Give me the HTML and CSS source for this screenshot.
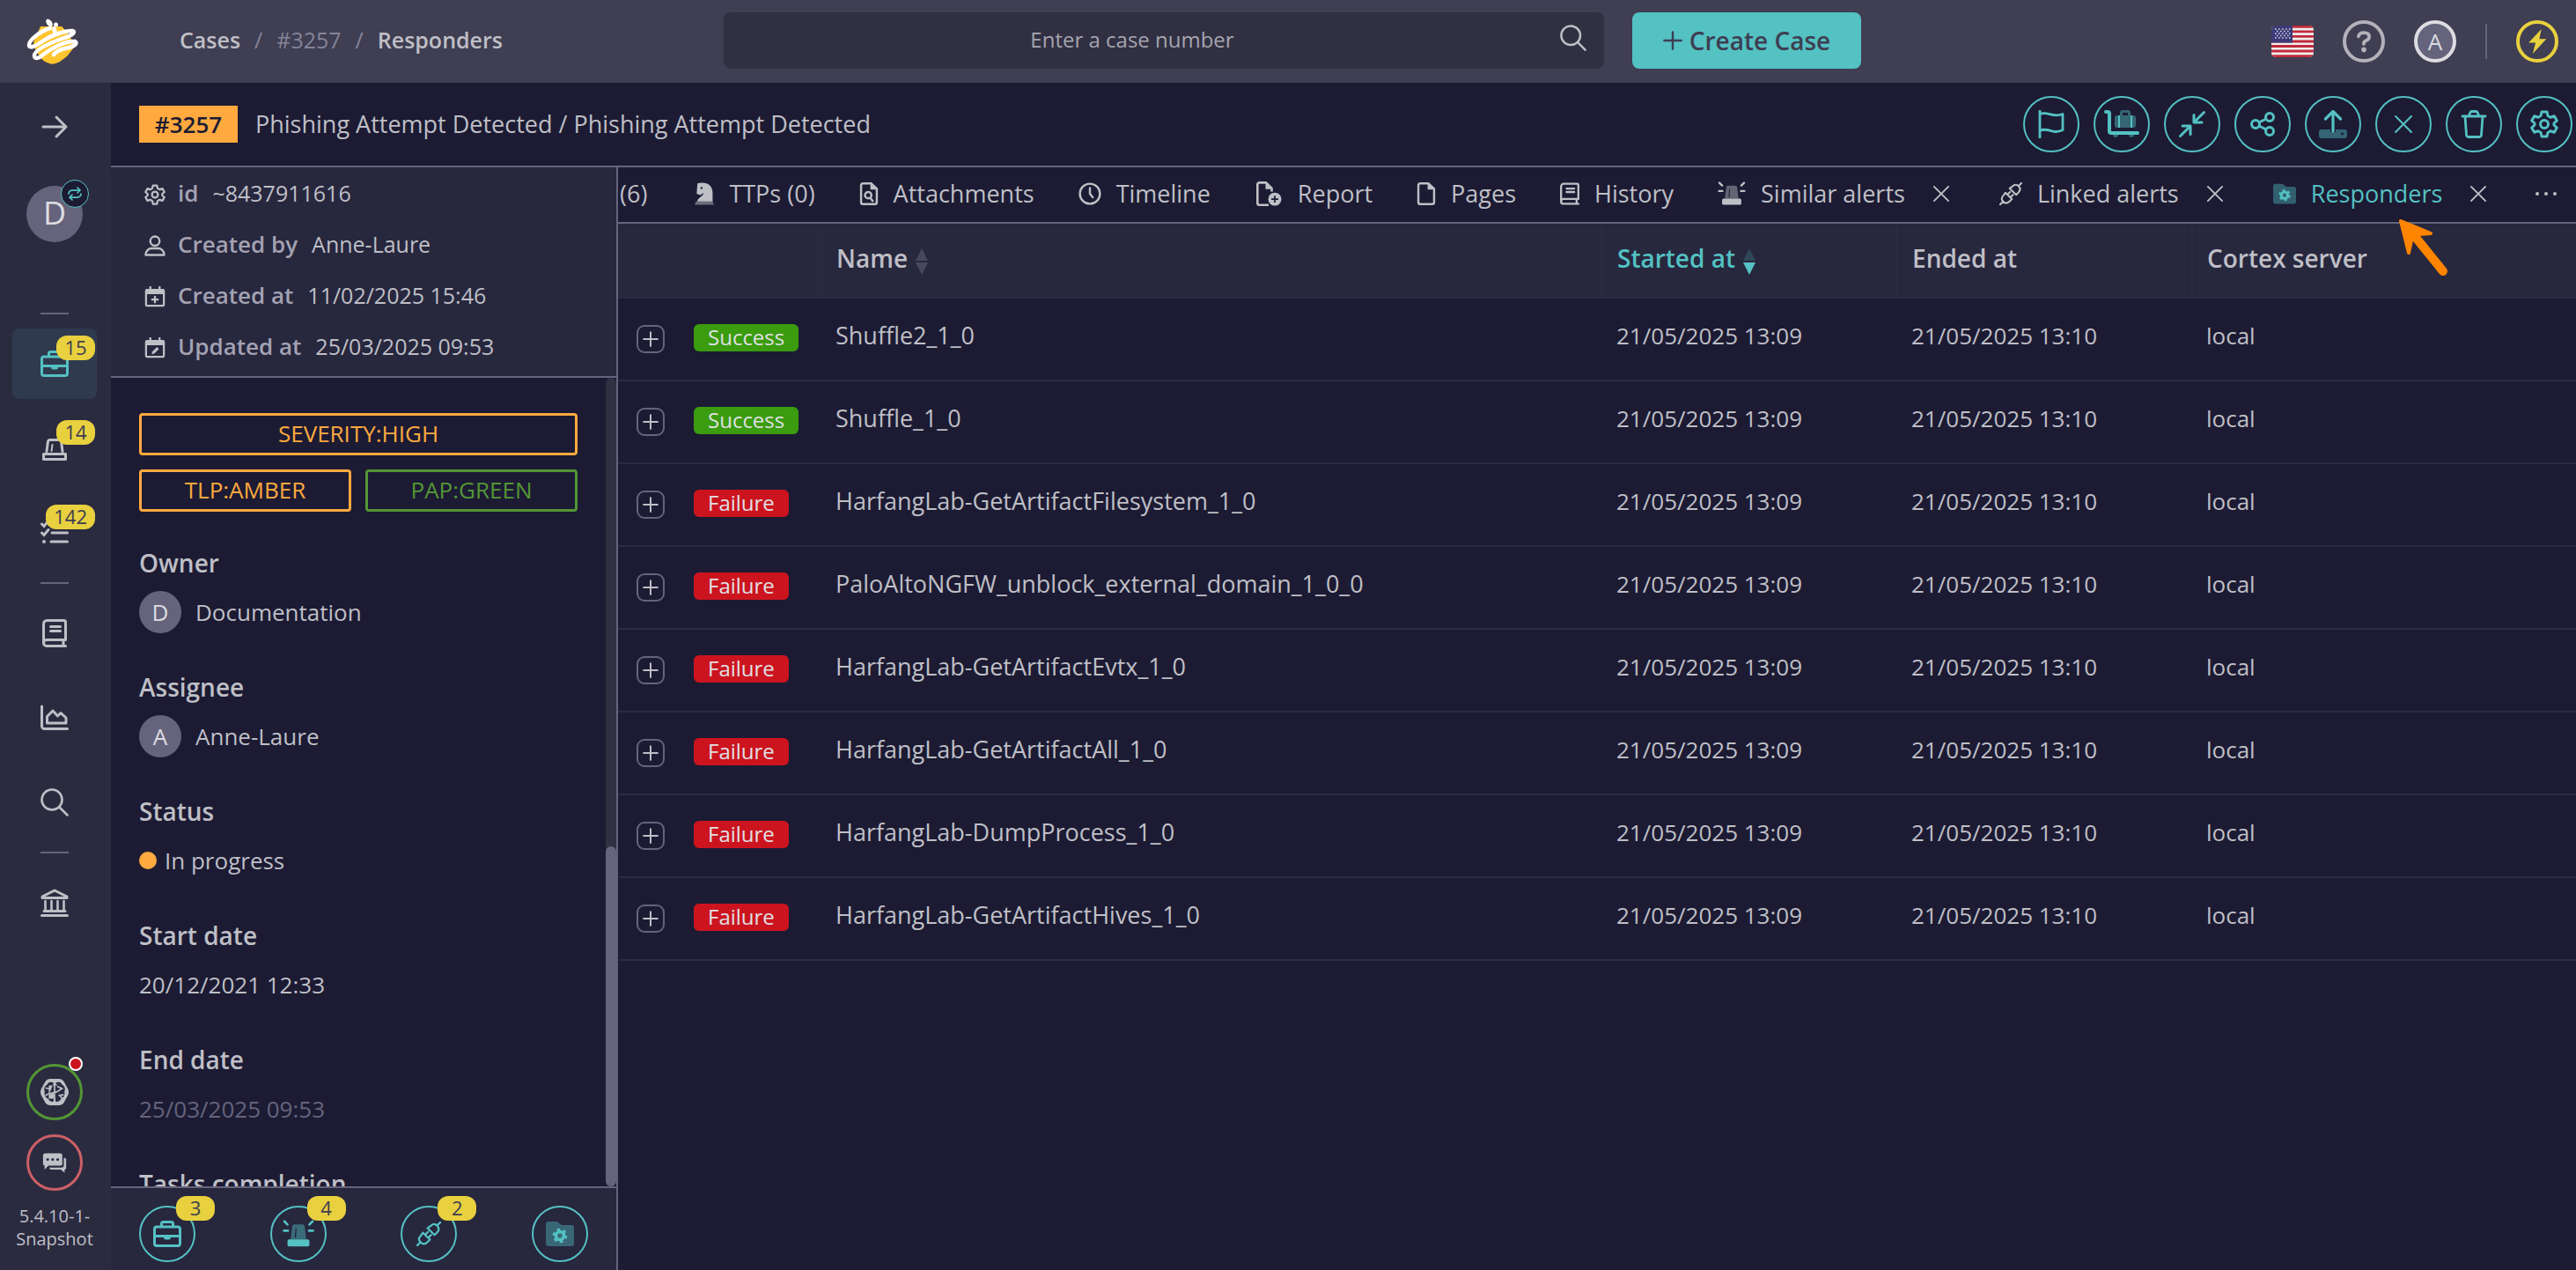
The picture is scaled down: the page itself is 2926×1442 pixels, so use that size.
FILE: index.html
```html
<!DOCTYPE html>
<html lang="en">
<head>
  <meta charset="UTF-8" />
  <title>#3257 - Responders</title>
  <link rel="stylesheet" href="styles.css">
</head>
<body>

  <!-- icon set -->
  <svg class="sprite" aria-hidden="true">
    <symbol id="i-briefcase" viewBox="0 0 32 32"><g fill="none" stroke="currentColor" stroke-width="3" stroke-linejoin="round"><rect x="1.500" y="8" width="29" height="21.500" rx="2.500"/><path d="M9.500 8V4.500a2 2 0 0 1 2-2h9a2 2 0 0 1 2 2V8M1.500 18.500h29"/></g><path d="M12 18h8v2a2.500 2.500 0 0 1-2.500 2.500h-3A2.500 2.500 0 0 1 12 20z" fill="currentColor"/></symbol>
    <symbol id="i-siren" viewBox="0 0 32 32"><g fill="none" stroke="currentColor" stroke-width="3" stroke-linejoin="round" stroke-linecap="round"><path d="M7 19.500L8.500 8a2 2 0 0 1 2-1.500h11a2 2 0 0 1 2 1.500L25 19.500M3.500 22.500h25v6h-25z"/><path d="M12.500 19l1-7" stroke-width="2"/></g></symbol>
    <symbol id="i-tasks" viewBox="0 0 32 32"><g fill="none" stroke="currentColor" stroke-width="3" stroke-linecap="round"><path d="M13 6h17.500M13 16h17.500M12 26h18.500M1.500 6l2.500 2.500 5-6M1.500 16l2.500 2.500 5-6"/></g><circle cx="4" cy="26" r="2" fill="currentColor"/></symbol>
    <symbol id="i-book" viewBox="2 0 28 32"><g fill="none" stroke="currentColor" stroke-width="3" stroke-linecap="round" stroke-linejoin="round"><path d="M28.500 23.500V3.500a2 2 0 0 0-2-2H7.500a4 4 0 0 0-4 4V27a3.500 3.500 0 0 0 3.500 3.500h21.500M28.500 23.500H7a3.500 3.500 0 0 0-3.500 3.500M26 24v6M11.500 8.500h11M11.500 13.500h11"/></g></symbol>
    <symbol id="i-chart" viewBox="0 0 32 32"><g fill="none" stroke="currentColor" stroke-width="3" stroke-linecap="round" stroke-linejoin="round"><path d="M1.500 3v22.500a3 3 0 0 0 3 3h26M7.500 22V14.500L14 8l5.500 6 3.500-3.500 6 5.500v6z"/></g></symbol>
    <symbol id="i-search" viewBox="0 0 32 32"><g fill="none" stroke="currentColor" stroke-width="2.600" stroke-linecap="round"><circle cx="13" cy="13" r="11.500"/><path d="M21.500 21.500L30.500 30.500"/></g></symbol>
    <symbol id="i-bank" viewBox="0 0 32 32"><g fill="none" stroke="currentColor" stroke-width="3" stroke-linecap="round" stroke-linejoin="round"><path d="M2 10.500v-1.500L16 2l14 7v1.500zM1.500 30.500h29M4 25.500h24"/><path d="M5.500 14v11M12.500 14v11M19.500 14v11M26.500 14v11" stroke-width="2.600"/></g></symbol>
    <symbol id="i-arrow" viewBox="0 0 32 32"><path d="M3 16h25M18 5l11 11-11 11" fill="none" stroke="currentColor" stroke-width="3" stroke-linecap="round" stroke-linejoin="round"/></symbol>
    <symbol id="i-swap" viewBox="0 0 32 32"><path d="M2 16a8 8 0 0 1 8-8h18M22 2l6 6-6 6M30 16a8 8 0 0 1-8 8H4M10 18l-6 6 6 6" fill="none" stroke="currentColor" stroke-width="3.500" stroke-linecap="round" stroke-linejoin="round"/></symbol>
    <symbol id="i-brain" viewBox="0 0 34 32"><path d="M11 0h12q3 0 5 3l5 9q2 4 0 8l-5 9q-2 3-5 3H11q-3 0-5-3l-5-9q-2-4 0-8l5-9q2-3 5-3z" fill="currentColor"/><path d="M16 5q-6-3-8 2-5 3-3 8-1 7 4 9 3 5 7 3V17l-6 2M18 5q6-3 8 2 5 3 3 8 1 7-4 9-3 5-7 3V16l7-3M10 8h14v16H10z" fill="#2b2b40"/><path d="M6 20q5-3 10-3.500t10-5.500M6 11l7 1.500M28 19l-5 1 4 4M17 4v24M20 9l7 3" fill="none" stroke="currentColor" stroke-width="1.800"/></symbol>
    <symbol id="i-chat" viewBox="0 0 32 32"><path d="M28 10h1a2 2 0 0 1 2 2v11a2 2 0 0 1-2 2v4l-5-4H12a3 3 0 0 1-3-2.500h16a3 3 0 0 0 3-3z" fill="currentColor"/><path d="M5 4h18a3 3 0 0 1 3 3v10a3 3 0 0 1-3 3H8l-5 5v-5a3 3 0 0 1-2-3V7a3 3 0 0 1 3-3z" fill="currentColor"/><g fill="#2b2b40"><circle cx="7" cy="12" r="1.800"/><circle cx="13.500" cy="12" r="1.800"/><circle cx="20" cy="12" r="1.800"/></g></symbol>
    <symbol id="i-gear" viewBox="0 0 32 32"><g fill="none" stroke="currentColor" stroke-width="3" stroke-linejoin="round"><path d="M13 2h6l1 4.500 3 1.700 4.300-1.400 3 5.200-3.300 3v2l3.300 3-3 5.200-4.300-1.400-3 1.700L19 30h-6l-1-4.500-3-1.700-4.300 1.400-3-5.200L5 17v-2l-3.300-3 3-5.200L9 8.200l3-1.700z"/><circle cx="16" cy="16" r="4.500"/></g></symbol>
    <symbol id="i-user" viewBox="0 0 32 32"><g fill="none" stroke="currentColor" stroke-width="3.200" stroke-linejoin="round"><circle cx="16" cy="9" r="7"/><path d="M2 30c0-7 5-10 9-10h10c4 0 9 3 9 10z"/></g></symbol>
    <symbol id="i-cal-plus" viewBox="0 0 32 32"><path d="M4 4h24a3 3 0 0 1 3 3v21a3 3 0 0 1-3 3H4a3 3 0 0 1-3-3V7a3 3 0 0 1 3-3zm0 8v16h24V12z" fill="currentColor" fill-rule="evenodd"/><path d="M9 0v6M23 0v6M16 14.500v11M10.500 20h11" stroke="currentColor" stroke-width="3"/></symbol>
    <symbol id="i-cal-edit" viewBox="0 0 32 32"><path d="M4 4h24a3 3 0 0 1 3 3v21a3 3 0 0 1-3 3H4a3 3 0 0 1-3-3V7a3 3 0 0 1 3-3zm0 8v16h24V12z" fill="currentColor" fill-rule="evenodd"/><path d="M9 0v6M23 0v6" stroke="currentColor" stroke-width="3"/><path d="M11 25.500l1-4 7-7 3 3-7 7z" fill="currentColor"/></symbol>
    <symbol id="i-knight" viewBox="2 0 28 32"><path d="M6 1c14-3 22 3 22 14v12H6c0-5 9-8 9-12l-5 3-5-2zm6 5a1.500 1.500 0 1 0 .1 0z" fill="currentColor" fill-rule="evenodd"/><path d="M4 27h24l2 5H2z" fill="currentColor" opacity=".5"/></symbol>
    <symbol id="i-file" viewBox="3 0 26 32"><path d="M7 1.500h12L27 9v19a2.500 2.500 0 0 1-2.500 2.500h-17A2.500 2.500 0 0 1 5 28V4a2.500 2.500 0 0 1 2.500-2.500" fill="none" stroke="currentColor" stroke-width="3"/><path d="M18 1l9 9h-9z" fill="currentColor"/></symbol>
    <symbol id="i-file-search" viewBox="3 0 26 32"><path d="M7 1.500h12L27 9v19a2.500 2.500 0 0 1-2.500 2.500h-17A2.500 2.500 0 0 1 5 28V4a2.500 2.500 0 0 1 2.500-2.500" fill="none" stroke="currentColor" stroke-width="3"/><path d="M18 1l9 9h-9z" fill="currentColor"/><g fill="none" stroke="currentColor" stroke-width="3"><circle cx="15" cy="18" r="4.500"/><path d="M18 22l4 5"/></g></symbol>
    <symbol id="i-file-plus" viewBox="0 0 34 32"><path d="M17 30.500H5A2.500 2.500 0 0 1 2.500 28V4A2.500 2.500 0 0 1 5 1.500h8.500L21 9v4" fill="none" stroke="currentColor" stroke-width="3"/><path d="M13 1l9 9h-9z" fill="currentColor"/><circle cx="25" cy="23" r="8.500" fill="currentColor"/><path d="M25 18.500v9M20.500 23h9" stroke="#1c1b33" stroke-width="2"/></symbol>
    <symbol id="i-clock" viewBox="0 0 32 32"><g fill="none" stroke="currentColor" stroke-width="3" stroke-linecap="round"><circle cx="16" cy="16" r="14"/><path d="M16 8v8l4 5"/></g></symbol>
    <symbol id="i-siren-on" viewBox="0 0 40 36"><path d="M10 25l2-16a3 3 0 0 1 3-3h10a3 3 0 0 1 3 3l2 16z" fill="currentColor" opacity=".45"/><path d="M16 23l1-12" stroke="#26263d" stroke-width="1.500"/><rect x="6" y="25" width="28" height="9" rx="2" fill="currentColor"/><path d="M2 2l4 4M1.500 14h5M38 2l-4 4M38.500 14h-5" stroke="currentColor" stroke-width="3" stroke-linecap="round"/></symbol>
    <symbol id="i-plug" viewBox="0 0 32 32"><g fill="none" stroke="currentColor" stroke-width="2.600" stroke-linecap="round" stroke-linejoin="round"><path d="M27 5l4-4M14.500 8.500l9 9 3-3c3.500-3.500 3.500-6 .5-9s-5.500-3-9 .5zM5 27l-4 4M8.500 14.500l9 9-3 3c-3.500 3.500-6 3.500-9 .5s-3-5.500.5-9zM11.500 17l3.500-3.500M15.500 21l3.500-3.500"/></g></symbol>
    <symbol id="i-folder-gear" viewBox="0 0 32 32"><path d="M3 2h9q2 0 3.500 2T19 6h10a3 3 0 0 1 3 3v18a3 3 0 0 1-3 3H3a3 3 0 0 1-3-3V5a3 3 0 0 1 3-3z" fill="currentColor" opacity=".42"/><g fill="none" stroke="currentColor"><circle cx="16" cy="18" r="4.500" stroke-width="3.600"/><circle cx="16" cy="18" r="7" stroke-width="2.600" stroke-dasharray="3.600 3.730"/></g></symbol>
    <symbol id="i-close" viewBox="0 0 32 32"><path d="M3 3l26 26M29 3L3 29" fill="none" stroke="currentColor" stroke-width="3" stroke-linecap="round"/></symbol>
    <symbol id="i-plus" viewBox="0 0 32 32"><path d="M16 2v28M2 16h28" fill="none" stroke="currentColor" stroke-width="3.500" stroke-linecap="round"/></symbol>
    <symbol id="i-dots" viewBox="0 0 32 32"><g fill="currentColor"><circle cx="6" cy="16" r="2"/><circle cx="16" cy="16" r="2"/><circle cx="26" cy="16" r="2"/></g></symbol>
    <symbol id="i-flag" viewBox="0 0 32 32"><path d="M3 1v30M3 4.500c9-4 14 5 26 0v18c-12 6-17-4-26 1" fill="none" stroke="currentColor" stroke-width="2.800" stroke-linecap="round" stroke-linejoin="round"/></symbol>
    <symbol id="i-cart" viewBox="0 0 40 32"><path d="M2 2h2a2 2 0 0 1 2 2v20a2 2 0 0 0 2 2h30" fill="none" stroke="currentColor" stroke-width="4" stroke-linecap="round"/><g fill="currentColor" opacity=".45"><path d="M12 9a3 3 0 0 1 3-3h3V3a3 3 0 0 1 3-3h6a3 3 0 0 1 3 3v3h3a3 3 0 0 1 3 3v8a3 3 0 0 1-3 3H15a3 3 0 0 1-3-3zm9-3h6V3h-6z" fill-rule="evenodd"/><path d="M10 28h6a3 3 0 0 1-6 0M28 28h6a3 3 0 0 1-6 0"/></g><path d="M17 6v14M31 6v14" stroke="currentColor" stroke-width="2"/></symbol>
    <symbol id="i-merge" viewBox="0 0 32 32"><path d="M29.500 2.500L18 14M18 5.500V14h9M2.500 29.500L14 18M5 18h9v9.500" fill="none" stroke="currentColor" stroke-width="3" stroke-linecap="round" stroke-linejoin="round"/></symbol>
    <symbol id="i-share" viewBox="0 0 32 32"><g fill="none" stroke="currentColor" stroke-width="3"><circle cx="8" cy="16" r="4.500"/><circle cx="24" cy="8" r="4.500"/><circle cx="24" cy="24" r="4.500"/><path d="M12 14l8-4M12 18l8 4"/></g></symbol>
    <symbol id="i-upload" viewBox="0 0 32 32"><path d="M3 22h10v3h6v-3h10a3 3 0 0 1 3 3v4a3 3 0 0 1-3 3H3a3 3 0 0 1-3-3v-4a3 3 0 0 1 3-3zm23.500 3.500a1.500 1.500 0 1 0 .1 0z" fill="currentColor" fill-rule="evenodd" opacity=".45"/><path d="M16 24V2M7.500 10L16 1.500l8.500 8.500" fill="none" stroke="currentColor" stroke-width="3.200" stroke-linecap="round" stroke-linejoin="round"/></symbol>
    <symbol id="i-trash" viewBox="0 0 32 32"><path d="M3 7h26M10 7l2-4.500q.5-1 1.500-1h5q1 0 1.500 1L22 7M6 7l1.500 21q.2 2.500 2.500 2.500h12q2.300 0 2.500-2.500L26 7" fill="none" stroke="currentColor" stroke-width="2.800" stroke-linecap="round" stroke-linejoin="round"/></symbol>
  </svg>

  <header class="topbar">
    <a class="logo" href="#" aria-label="Home">
      <svg viewBox="0 0 76 72">
        <path d="M22 19h24l5 5q8 10 9 19l-8 10-8 6q-7 4-12 2-7-2-10-7-7-8-8-17z" fill="#fec52e"/>
        <path d="M33 21C20 25 9 35 9 40c0 5 8 1 15-4 12-8 26-12 34-12 6 2-4 7-12 9-16 6-31 13-31 19 0 5 6 3 10-1 12-9 27-16 36-15 5 3-4 7-11 8q-9 2-13 7" fill="none" stroke="#fff" stroke-width="4.500" stroke-linecap="round"/>
        <g fill="#fff"><ellipse cx="32" cy="15" rx="3" ry="5" transform="rotate(-35 32 15)"/><circle cx="39.500" cy="17" r="2.500"/><ellipse cx="38" cy="24" rx="2.500" ry="5" transform="rotate(-10 38 24)"/></g>
      </svg>
    </a>
    <nav class="breadcrumb">
      <a href="#">Cases</a><span>/</span><a class="dim" href="#">#3257</a><span>/</span><a href="#">Responders</a>
    </nav>
    <div class="search">
      <input type="text" placeholder="Enter a case number" aria-label="Enter a case number">
      <svg><use href="#i-search"/></svg>
    </div>
    <button class="create"><svg><use href="#i-plus"/></svg>Create Case</button>
    <div class="topbar-right">
      <svg class="flag" viewBox="0 0 48 36">
        <clipPath id="flagClip"><rect width="48" height="36" rx="5"/></clipPath>
        <g clip-path="url(#flagClip)">
          <path fill="#eee" d="M0 0h48v36H0z"/>
          <path d="M0 1.400h48M0 6.900h48M0 12.400h48M0 18h48M0 23.500h48M0 29h48M0 34.600h48" stroke="#c02a3a" stroke-width="2.800"/>
          <path fill="#3c3b78" d="M0 0h24v19.400H0z"/>
          <path d="M4 4h18M4 9h18M4 14h18" stroke="#d5d5e6" stroke-width="1.600" stroke-dasharray="1.600 2.400"/>
          <path d="M6 6.500h14M6 11.500h14" stroke="#d5d5e6" stroke-width="1.600" stroke-dasharray="1.600 2.400"/>
        </g>
      </svg>
      <button class="round-48 help" aria-label="Help"><svg viewBox="0 0 32 32"><path d="M9.500 10q1-4.500 6.500-4.500 6.500 0 6.500 4.500 0 3.500-3.500 5t-3 4" fill="none" stroke="currentColor" stroke-width="4" stroke-linecap="round"/><circle cx="16" cy="26" r="3" fill="currentColor"/></svg></button>
      <button class="round-48 me">A</button>
      <span class="sep"></span>
      <button class="round-48 bolt" aria-label="Actions"><svg viewBox="0 0 32 32"><path d="M21 1L5.500 17.500H14L10.500 31 27 13h-8.500z" fill="currentColor"/></svg></button>
    </div>
  </header>

  <div class="app">
    <aside class="sidebar">
      <button class="expand" aria-label="Expand menu"><svg><use href="#i-arrow"/></svg></button>
      <div class="org">D<span class="org-swap"><svg><use href="#i-swap"/></svg></span></div>
      <hr>
      <a class="nav-item active" href="#" aria-label="Cases"><svg><use href="#i-briefcase"/></svg><span class="count">15</span></a>
      <a class="nav-item" href="#" aria-label="Alerts"><svg><use href="#i-siren"/></svg><span class="count">14</span></a>
      <a class="nav-item" href="#" aria-label="Tasks"><svg><use href="#i-tasks"/></svg><span class="count">142</span></a>
      <hr>
      <a class="nav-item" href="#" aria-label="Knowledge base"><svg><use href="#i-book"/></svg></a>
      <a class="nav-item" href="#" aria-label="Dashboards"><svg><use href="#i-chart"/></svg></a>
      <a class="nav-item" href="#" aria-label="Search"><svg><use href="#i-search"/></svg></a>
      <hr>
      <a class="nav-item" href="#" aria-label="Organisation"><svg><use href="#i-bank"/></svg></a>
      <div class="sidebar-bottom">
        <button class="round-64 brain" aria-label="Cortex"><svg><use href="#i-brain"/></svg><span class="alert-dot"></span></button>
        <button class="round-64 chat" aria-label="Chat"><svg><use href="#i-chat"/></svg></button>
        <p class="version">5.4.10-1-<br>Snapshot</p>
      </div>
    </aside>

    <main class="case">
      <div class="case-bar">
        <span class="case-id">#3257</span>
        <h1>Phishing Attempt Detected / Phishing Attempt Detected</h1>
        <div class="case-actions">
          <button class="round-64" aria-label="Flag"><svg><use href="#i-flag"/></svg></button>
          <button class="round-64" aria-label="Add to cart"><svg class="wide"><use href="#i-cart"/></svg></button>
          <button class="round-64" aria-label="Merge"><svg><use href="#i-merge"/></svg></button>
          <button class="round-64" aria-label="Share"><svg><use href="#i-share"/></svg></button>
          <button class="round-64" aria-label="Export"><svg><use href="#i-upload"/></svg></button>
          <button class="round-64" aria-label="Close"><svg class="small"><use href="#i-close"/></svg></button>
          <button class="round-64" aria-label="Delete"><svg><use href="#i-trash"/></svg></button>
          <button class="round-64" aria-label="Settings"><svg><use href="#i-gear"/></svg></button>
        </div>
      </div>

      <div class="case-body">
        <section class="details">
          <ul class="meta">
            <li><svg><use href="#i-gear"/></svg><b>id</b> ~8437911616</li>
            <li><svg><use href="#i-user"/></svg><b>Created by</b> Anne-Laure</li>
            <li><svg><use href="#i-cal-plus"/></svg><b>Created at</b> 11/02/2025 15:46</li>
            <li><svg><use href="#i-cal-edit"/></svg><b>Updated at</b> 25/03/2025 09:53</li>
          </ul>

          <div class="fields">
            <div class="fields-scroll">
              <div class="tags">
                <button class="tag amber full">SEVERITY:HIGH</button>
                <button class="tag amber">TLP:AMBER</button>
                <button class="tag green">PAP:GREEN</button>
              </div>
              <div class="field"><h2>Owner</h2><p><span class="avatar">D</span>Documentation</p></div>
              <div class="field"><h2>Assignee</h2><p><span class="avatar">A</span>Anne-Laure</p></div>
              <div class="field"><h2>Status</h2><p class="status"><span class="dot"></span>In progress</p></div>
              <div class="field"><h2>Start date</h2><p>20/12/2021 12:33</p></div>
              <div class="field"><h2>End date</h2><p class="muted">25/03/2025 09:53</p></div>
              <div class="field"><h2>Tasks completion</h2></div>
            </div>
            <div class="track"><span class="thumb"></span></div>
          </div>

          <footer class="shortcuts">
            <button class="round-64" aria-label="Similar cases"><svg><use href="#i-briefcase"/></svg><span class="count">3</span></button>
            <button class="round-64" aria-label="Similar alerts"><svg class="wide"><use href="#i-siren-on"/></svg><span class="count">4</span></button>
            <button class="round-64" aria-label="Linked alerts"><svg class="mid"><use href="#i-plug"/></svg><span class="count">2</span></button>
            <button class="round-64" aria-label="Responders"><svg><use href="#i-folder-gear"/></svg></button>
          </footer>
        </section>

        <section class="content">
          <nav class="tabs">
            <a href="#">(6)</a>
            <a href="#"><svg class="narrow"><use href="#i-knight"/></svg>TTPs (0)</a>
            <a href="#"><svg class="narrow"><use href="#i-file-search"/></svg>Attachments</a>
            <a href="#"><svg><use href="#i-clock"/></svg>Timeline</a>
            <a href="#"><svg class="broad"><use href="#i-file-plus"/></svg>Report</a>
            <a href="#"><svg class="narrow"><use href="#i-file"/></svg>Pages</a>
            <a href="#"><svg class="narrow"><use href="#i-book"/></svg>History</a>
            <span class="tab"><a href="#"><svg class="broad"><use href="#i-siren-on"/></svg>Similar alerts</a><button aria-label="Close Similar alerts"><svg><use href="#i-close"/></svg></button></span>
            <span class="tab"><a href="#"><svg><use href="#i-plug"/></svg>Linked alerts</a><button aria-label="Close Linked alerts"><svg><use href="#i-close"/></svg></button></span>
            <span class="tab"><a class="current" href="#"><svg><use href="#i-folder-gear"/></svg>Responders</a><button aria-label="Close Responders"><svg><use href="#i-close"/></svg></button></span>
            <button class="more" aria-label="More tabs"><svg><use href="#i-dots"/></svg></button>
          </nav>

          <table id="responders">
            <thead>
              <tr>
                <th class="col-expand"></th>
                <th class="col-status"></th>
                <th>Name<svg class="sort" viewBox="0 0 14 30"><path d="M7 0l7 14H0zM7 30l7-14H0z"/></svg></th>
                <th class="col-date sorted">Started at<svg class="sort" viewBox="0 0 14 30"><path class="off" d="M7 0l7 14H0z"/><path d="M7 30l7-14H0z"/></svg></th>
                <th class="col-date">Ended at</th>
                <th class="col-server">Cortex server</th>
              </tr>
            </thead>
            <tbody></tbody>
          </table>

          <svg class="pointer" viewBox="0 0 60 72"><path class="shaft" d="M14 16L52 63"/><path class="head" d="M4 6L38 20 25 21 16 28 13 42z"/></svg>
        </section>
      </div>
    </main>
  </div>

  <script>
    const jobs = [
      ["Success", "Shuffle2_1_0"],
      ["Success", "Shuffle_1_0"],
      ["Failure", "HarfangLab-GetArtifactFilesystem_1_0"],
      ["Failure", "PaloAltoNGFW_unblock_external_domain_1_0_0"],
      ["Failure", "HarfangLab-GetArtifactEvtx_1_0"],
      ["Failure", "HarfangLab-GetArtifactAll_1_0"],
      ["Failure", "HarfangLab-DumpProcess_1_0"],
      ["Failure", "HarfangLab-GetArtifactHives_1_0"]
    ];
    const tbody = document.querySelector("#responders tbody");
    jobs.forEach(([status, name]) => {
      const row = document.createElement("tr");
      row.innerHTML = `
        <td><button class="expand-row" aria-label="Show ${name}"><svg><use href="#i-plus"/></svg></button></td>
        <td><span class="result ${status.toLowerCase()}">${status}</span></td>
        <td class="name">${name}</td>
        <td>21/05/2025 13:09</td>
        <td>21/05/2025 13:10</td>
        <td>local</td>
      `;
      tbody.appendChild(row);
    });
  </script>

</body>
</html>
```
FILE: styles.css
```css
* { box-sizing: border-box; }
body { margin: 0; height: 100vh; display: flex; flex-direction: column; font: 26px/36px "Open Sans", "Noto Sans", sans-serif; background: #1c1b33; color: #bfbfc6; overflow: hidden; }
a { color: inherit; text-decoration: none; }
button { font: inherit; color: inherit; background: none; border: none; padding: 0; cursor: pointer; }
h1, h2, p, ul { margin: 0; padding: 0; }
.sprite { position: absolute; width: 0; height: 0; }

/* top bar */
.topbar { display: flex; align-items: center; flex: 0 0 94px; background: #3f3e52; padding: 0 20px 0 24px; }
.logo svg { display: block; width: 76px; height: 72px; }
.breadcrumb { display: flex; gap: 16px; flex: 0 1 722px; padding: 0 0 4px 104px; font-size: 25px; font-weight: 600; }
.breadcrumb span { color: #85849a; font-weight: 400; }
.breadcrumb .dim { color: #85849a; font-weight: 400; }
.search { position: relative; flex: 0 0 1000px; margin-bottom: 2px; }
.search input { display: block; width: 100%; height: 64px; border: none; border-radius: 8px; background: #303042; color: #bfbfc6; font: inherit; font-size: 24px; text-align: center; padding: 0 72px 4px 0; }
.search input::placeholder { color: #a6a5b0; opacity: 1; }
.search svg { position: absolute; right: 20px; top: 14px; width: 30px; height: 30px; }
.create { display: flex; align-items: center; justify-content: center; gap: 8px; flex: 0 0 260px; height: 64px; margin: 0 0 2px 32px; border-radius: 8px; background: #54c1c3; color: #3e3e52; font-size: 28px; font-weight: 600; }
.create svg { width: 22px; height: 22px; }
.topbar-right { display: flex; align-items: center; justify-content: flex-end; gap: 33px; flex: 1; }
.flag { width: 48px; height: 36px; }
.sep { width: 2px; height: 40px; background: #65647c; }
.round-48 { display: flex; align-items: center; justify-content: center; width: 48px; height: 48px; border: 4px solid; border-radius: 50%; }
.round-48 svg { width: 30px; height: 30px; }
.help { color: #b3b2ba; }
.me { color: #dcdce2; background: #65647c; }
.bolt { color: #e8d03f; }

.app { display: flex; flex: 1; min-height: 0; }

/* left menu */
.sidebar { display: flex; flex-direction: column; align-items: center; flex: 0 0 126px; padding-right: 2px; background: #2b2b40; }
.sidebar svg { display: block; width: 32px; height: 32px; }
.expand { margin-top: 34px; }
.org { position: relative; width: 64px; height: 64px; margin: 51px 0 80px; border-radius: 50%; background: #65647c; color: #dcdce2; font-size: 36px; line-height: 62px; text-align: center; }
.org-swap { position: absolute; right: -7px; top: -7px; width: 32px; height: 32px; padding: 7px; border: 1px solid #54c1c3; border-radius: 50%; background: #1c1b33; color: #54c1c3; }
.sidebar .org-swap svg { width: 16px; height: 16px; }
.sidebar hr { width: 32px; height: 2px; margin: 0; border: none; background: #65647c; }
.nav-item { position: relative; display: flex; align-items: center; justify-content: center; flex: 0 0 80px; width: 96px; margin-bottom: 16px; border-radius: 8px; }
hr + .nav-item { margin-top: 16px; }
.nav-item.active { background: #2f3a4f; color: #54c1c3; }
.count { position: absolute; right: 2px; top: 8px; min-width: 44px; height: 28px; padding: 0 9px; border-radius: 12px; background: #e8d03f; color: #3e3e52; font-size: 22px; line-height: 27px; text-align: center; }
.sidebar-bottom { display: flex; flex-direction: column; align-items: center; gap: 16px; margin-top: auto; padding-bottom: 22px; }
.round-64 { position: relative; display: flex; align-items: center; justify-content: center; width: 64px; height: 64px; border: 2px solid #54c1c3; border-radius: 50%; color: #54c1c3; }
.round-64 svg { width: 32px; height: 32px; }
.round-64 .wide { width: 40px; }
.round-64 .mid { width: 28px; height: 28px; }
.round-64 .small { width: 22px; height: 22px; }
.brain { border: 3px solid #539635; color: #bfbfc6; }
.chat { border: 3px solid #cc6066; color: #bfbfc6; }
.sidebar .chat svg { width: 28px; height: 28px; }
.alert-dot { position: absolute; right: -3px; top: -11px; width: 16px; height: 16px; border: 2px solid #fff; border-radius: 50%; background: #cc141f; }
.version { font-size: 20px; line-height: 26px; text-align: center; }

/* case header */
.case { display: flex; flex-direction: column; flex: 1; min-width: 0; }
.case-bar { display: flex; align-items: center; flex: 0 0 96px; padding: 0 4px 0 32px; border-bottom: 2px solid #65647c; }
.case-id { width: 112px; height: 42px; margin-right: 20px; background: #ffa93f; color: #1c1b33; font-weight: 600; line-height: 42px; text-align: center; }
.case-bar h1 { font-size: 27px; font-weight: 400; }
.case-actions { display: flex; gap: 16px; margin-left: auto; }
.case-body { display: flex; flex: 1; min-height: 0; }

/* details column */
.details { display: flex; flex-direction: column; flex: 0 0 576px; border-right: 2px solid #65647c; }
.meta { display: flex; flex-direction: column; flex: 0 0 239px; padding: 0 32px; list-style: none; background: #27273e; border-bottom: 2px solid #65647c; font-size: 25px; }
.meta li { display: flex; align-items: center; height: 58px; padding-left: 6px; }
.meta svg { width: 24px; height: 24px; margin: 4px 14px 0 0; }
.meta b { margin-right: 16px; color: #a3a2b2; font-size: 26px; font-weight: 600; }
.fields { position: relative; flex: 1; min-height: 0; overflow: hidden; }
.fields-scroll { padding: 40px 44px 0 32px; }
.tags { display: grid; grid-template-columns: 1fr 1fr; gap: 16px; margin-bottom: 40px; }
.tag { height: 48px; border: 3px solid; border-radius: 4px; line-height: 38px; padding-bottom: 2px; }
.tag.full { grid-column: span 2; }
.tag.amber { color: #ffa93f; }
.tag.green { color: #539635; }
.field { height: 141px; }
.field h2 { margin-bottom: 14px; font-size: 28px; font-weight: 600; line-height: 36px; }
.field p { display: flex; align-items: center; gap: 16px; height: 48px; }
.field .status { gap: 9px; }
.avatar { width: 48px; height: 48px; border-radius: 50%; background: #65647c; color: #dcdce2; line-height: 48px; text-align: center; }
.dot { width: 20px; height: 20px; border-radius: 50%; background: #ffa93f; }
.muted { color: #65647c; }
.track { position: absolute; right: 0; top: 0; bottom: 0; width: 12px; border-radius: 6px; background: #303042; }
.thumb { position: absolute; left: 0; right: 0; bottom: 0; height: 42%; border-radius: 6px; background: #65647c; }
.shortcuts { display: flex; align-items: flex-start; justify-content: space-between; flex: 0 0 95px; padding: 20px 32px 0; border-top: 2px solid #65647c; background: #27273e; }
.shortcuts .count { right: -24px; top: -13px; }

/* tabs */
.content { position: relative; flex: 1; min-width: 0; }
.tabs { display: flex; align-items: center; gap: 50px; height: 64px; padding: 0 18px 2px 2px; border-bottom: 2px solid #65647c; font-size: 27px; white-space: nowrap; }
.tabs a, .tab { display: flex; align-items: center; }
.tabs svg { display: block; width: 26px; height: 26px; }
.tabs a svg { margin-right: 17px; }
.tabs a .narrow { width: 22px; }
.tabs a .broad { width: 32px; height: 28px; }
.tabs > a:first-child { margin-right: 4px; }
.tab + .tab { margin-left: 6px; }
.tab button { margin-left: 31px; }
.tab button svg { width: 20px; height: 20px; }
.tabs .more { margin-left: auto; }
.tabs .more svg { width: 32px; height: 32px; }
.current { color: #54c1c3; }

/* jobs table */
table { width: 100%; table-layout: fixed; border-collapse: collapse; }
th, td { padding: 0 16px; text-align: left; white-space: nowrap; border-bottom: 2px solid #2b2b40; }
th { height: 84px; padding-bottom: 5px; background: #27273e; font-size: 28px; font-weight: 600; border-right: 2px solid #2b2b40; }
th:first-child, th:last-child { border-right: none; }
td { height: 94px; padding-bottom: 8px; }
td.name { font-size: 27px; }
.col-expand { width: 70px; }
.col-status { width: 161px; }
.col-date { width: 335px; }
.col-server { width: 436px; }
.sort { width: 14px; height: 30px; margin-left: 9px; vertical-align: -8px; fill: #48475c; }
.sorted { color: #54c1c3; }
.sorted .sort { fill: #54c1c3; }
.sorted .off { fill: #2f4756; }
.expand-row { display: flex; align-items: center; justify-content: center; width: 32px; height: 32px; margin: 8px 0 0 5px; border: 2px solid #65647c; border-radius: 9px; }
.expand-row svg { width: 18px; height: 18px; }
.result { display: inline-block; height: 31px; padding: 0 16px; border-radius: 6px; color: #e0e0e4; font-size: 24px; line-height: 30px; vertical-align: middle; }
.success { background: #3a9c0e; }
.failure { background: #cc141f; }

/* arrow that points at the open tab */
.pointer { position: absolute; right: 143px; top: 55px; width: 60px; height: 72px; fill: #ff8400; stroke: #ff8400; stroke-linecap: round; stroke-linejoin: round; }
.pointer .head { stroke-width: 4; }
.pointer .shaft { stroke-width: 10; }
```
